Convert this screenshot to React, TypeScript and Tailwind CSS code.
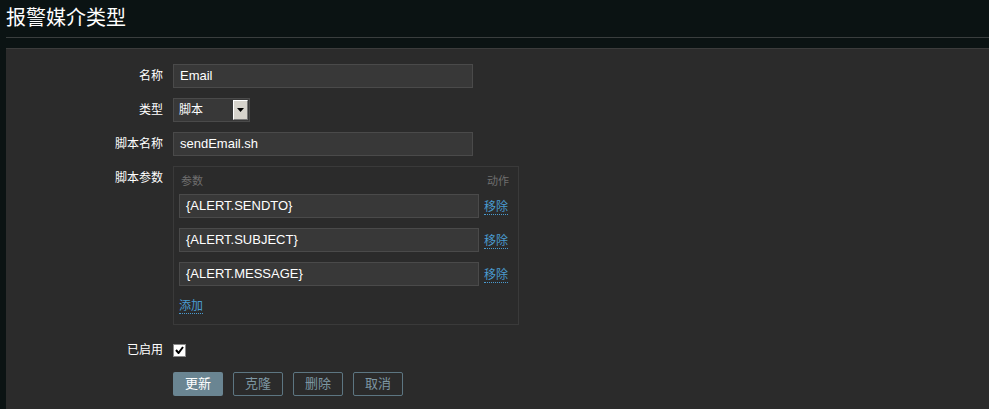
import React from 'react';

const font = "font-['Liberation_Sans','Noto_Sans_CJK_SC',sans-serif]";

const Label: React.FC<{ children: React.ReactNode; className?: string }> = ({ children, className = '' }) => (
  <div className={`w-[167px] shrink-0 pr-[10px] text-right text-[12px] text-white ${className}`}>{children}</div>
);

const TextInput: React.FC<{ value: string; width: string }> = ({ value, width }) => (
  <div className={`${width} h-[24px] flex items-center px-[6px] bg-[#383838] border border-[#4a4a4a] text-[13px] text-white`}>
    {value}
  </div>
);

const Link: React.FC<{ children: React.ReactNode }> = ({ children }) => (
  <span className="text-[12px] text-[#4a9bd0] border-b border-dotted border-[#4a9bd0] leading-[14px] cursor-pointer">{children}</span>
);

const params = ['{ALERT.SENDTO}', '{ALERT.SUBJECT}', '{ALERT.MESSAGE}'];

export default function App() {
  return (
    <div className={`w-[989px] h-[409px] bg-[#0b1313] ${font} overflow-hidden`}>
      <div className="pl-[6px] pt-[6px]">
        <div className="h-[32px] border-b border-[#3a3e3e] text-[20px] leading-[24px] text-white">报警媒介类型</div>
      </div>
      <div className="ml-[6px] mt-[10px] h-[400px] bg-[#2b2b2b] border-t border-[#3c3c3c] pt-[15px]">
        <div className="flex items-center">
          <Label>名称</Label>
          <TextInput value="Email" width="w-[300px]" />
        </div>
        <div className="flex items-center mt-[10px]">
          <Label>类型</Label>
          <div className="w-[77px] h-[24px] flex items-center justify-between bg-[#383838] border border-[#4a4a4a] text-[12px] text-white pl-[5px] pr-[1px]">
            <span>脚本</span>
            <div className="w-[15px] h-[20px] bg-[#d6d3cc] border-t border-l border-t-white border-l-white border-r border-b border-r-[#777] border-b-[#777] flex items-center justify-center">
              <svg width="7" height="4" viewBox="0 0 7 4"><path d="M0 0h7L3.5 4z" fill="#000" /></svg>
            </div>
          </div>
        </div>
        <div className="flex items-center mt-[10px]">
          <Label>脚本名称</Label>
          <TextInput value="sendEmail.sh" width="w-[300px]" />
        </div>
        <div className="flex items-start mt-[10px]">
          <Label className="pt-[3px]">脚本参数</Label>
          <div className="w-[346px] h-[159px] border border-[#3a3a3a] px-[5px]">
            <div className="h-[21px] flex items-end justify-between text-[11px] leading-[13px] text-[#6f6f6f] pl-[2px] pr-[4px]">
              <span>参数</span>
              <span>动作</span>
            </div>
            {params.map((p, i) => (
              <div key={p} className={`flex items-center ${i === 0 ? 'mt-[6px]' : 'mt-[10px]'}`}>
                <TextInput value={p} width="w-[300px]" />
                <div className="ml-[5px]"><Link>移除</Link></div>
              </div>
            ))}
            <div className="mt-[7px]"><Link>添加</Link></div>
          </div>
        </div>
        <div className="flex items-center h-[14px] mt-[18px]">
          <Label>已启用</Label>
          <div className="w-[13px] h-[13px] bg-white border border-[#888] flex items-center justify-center">
            <svg width="9" height="8" viewBox="0 0 9 8"><path d="M1 4l2.5 3L8 1" stroke="#000" strokeWidth="2" fill="none" /></svg>
          </div>
        </div>
        <div className="flex items-center mt-[15px] pl-[167px] gap-[10px]">
          <div className="w-[50px] h-[24px] flex items-center justify-center bg-[#6a8592] rounded-[2px] text-[13px] text-white">更新</div>
          {['克隆', '删除', '取消'].map((t) => (
            <div key={t} className="w-[50px] h-[24px] flex items-center justify-center border border-[#5d7682] rounded-[2px] text-[13px] text-[#7e97a3]">{t}</div>
          ))}
        </div>
      </div>
    </div>
  );
}
